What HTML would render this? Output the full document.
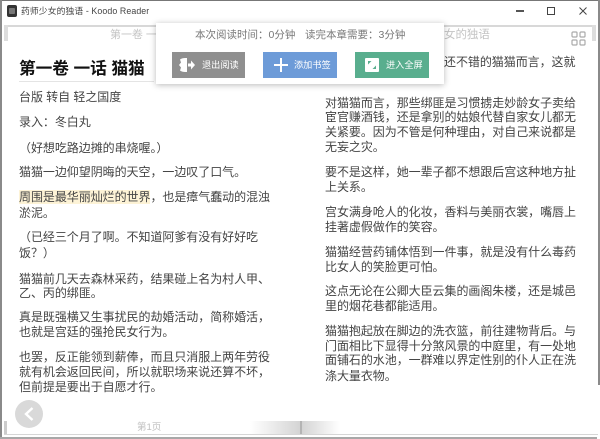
<!DOCTYPE html>
<html><head><meta charset="utf-8">
<style>
html,body{margin:0;padding:0}
body{width:600px;height:439px;overflow:hidden;background:#fff;position:relative;font-family:"Liberation Sans","Noto Sans CJK SC",sans-serif}
#w{position:absolute;left:0;top:0;width:600px;height:439px;filter:blur(.3px)}
.l{position:absolute;white-space:nowrap;font-size:12px;letter-spacing:-.05px;line-height:16px;height:16px;color:#444}
.r{position:absolute}
.btn{position:absolute;top:52px;height:26px;color:#fff;font-size:9.2px;line-height:26px;box-sizing:border-box}
</style></head><body><div id="w">
<!-- window frame -->
<div class="r" style="left:0;top:0;width:600px;height:1px;background:#777"></div>
<div class="r" style="left:0;top:0;width:2px;height:439px;background:#8a8a8a"></div>
<div class="r" style="left:598px;top:0;width:2px;height:385px;background:#8a8a8a"></div>
<div class="r" style="left:0;top:437px;width:597px;height:2px;background:#a8a8a8"></div>
<!-- title bar -->
<div class="r" style="left:7px;top:5px;width:10px;height:12px;border-radius:2px;background:#333"></div>
<div class="r" style="left:9px;top:8px;width:6px;height:6px;background:#777;border-radius:1px"></div>
<div class="l" style="left:21px;top:3px;font-size:8.8px;letter-spacing:.1px;color:#444">药师少女的独语 - Koodo Reader</div>
<div class="r" style="left:516px;top:10px;width:8px;height:1.5px;background:#555"></div>
<div class="r" style="left:547px;top:7px;width:6px;height:6px;border:1px solid #444"></div>
<svg class="r" style="left:578px;top:6px" width="10" height="10"><path d="M1.5 1.5L8.5 8.5M8.5 1.5L1.5 8.5" stroke="#444" stroke-width="1"/></svg>
<!-- reader frame -->
<div class="r" style="left:4px;top:25px;width:592px;height:2px;background:#d8d8d8"></div>
<div class="r" style="left:4px;top:25px;width:4px;height:16px;background:#ddd"></div>
<div class="r" style="left:592px;top:25px;width:4px;height:16px;background:#ddd"></div>
<!-- running head -->
<div class="l" style="left:110px;top:27px;font-size:11px;color:#c4c4c4">第一卷 一话 猫猫</div>
<div class="l" style="left:444px;top:27px;font-size:11.5px;color:#c4c4c4">女的独语</div>
<svg class="r" style="left:571px;top:31px" width="15" height="15"><g fill="none" stroke="#aaa" stroke-width="1.2"><rect x="1" y="1" width="5" height="5" rx="1"/><rect x="9" y="1" width="5" height="5" rx="1"/><rect x="1" y="9" width="5" height="5" rx="1"/><rect x="9" y="9" width="5" height="5" rx="1"/></g></svg>
<!-- left column -->
<div class="l" style="left:19px;top:58px;font-size:16.7px;line-height:22px;height:22px;font-weight:700;color:#111">第一卷 一话 猫猫</div>
<div class="r" style="left:19px;top:81px;width:135px;height:1px;background:#e4e4e4"></div>
<div class="l" style="left:19px;top:89px">台版 转自 轻之国度</div>
<div class="l" style="left:19px;top:114px">录入：冬白丸</div>
<div class="l" style="left:19px;top:140px">（好想吃路边摊的串烧喔。）</div>
<div class="l" style="left:19px;top:164px">猫猫一边仰望阴晦的天空，一边叹了口气。</div>
<div class="r" style="left:19px;top:190px;width:131px;height:14px;background:#fdf3d6"></div>
<div class="l" style="left:19px;top:189px">周围是最华丽灿烂的世界，也是瘴气蠢动的混浊</div>
<div class="l" style="left:19px;top:205px">淤泥。</div>
<div class="l" style="left:19px;top:229px">（已经三个月了啊。不知道阿爹有没有好好吃</div>
<div class="l" style="left:19px;top:245px">饭？）</div>
<div class="l" style="left:19px;top:271px">猫猫前几天去森林采药，结果碰上名为村人甲、</div>
<div class="l" style="left:19px;top:285px">乙、丙的绑匪。</div>
<div class="l" style="left:19px;top:309px">真是既强横又生事扰民的劫婚活动，简称婚活，</div>
<div class="l" style="left:19px;top:324px">也就是宫廷的强抢民女行为。</div>
<div class="l" style="left:19px;top:349px">也罢，反正能领到薪俸，而且只消服上两年劳役</div>
<div class="l" style="left:19px;top:364px">就有机会返回民间，所以就职场来说还算不坏，</div>
<div class="l" style="left:19px;top:379px">但前提是要出于自愿才行。</div>
<!-- right column -->
<div class="l" style="left:444px;top:54px">还不错的猫猫而言，这就</div>
<div class="l" style="left:325px;top:95px">对猫猫而言，那些绑匪是习惯掳走妙龄女子卖给</div>
<div class="l" style="left:325px;top:109px">宦官赚酒钱，还是拿别的姑娘代替自家女儿都无</div>
<div class="l" style="left:325px;top:124px">关紧要。因为不管是何种理由，对自己来说都是</div>
<div class="l" style="left:325px;top:139px">无妄之灾。</div>
<div class="l" style="left:325px;top:164px">要不是这样，她一辈子都不想跟后宫这种地方扯</div>
<div class="l" style="left:325px;top:179px">上关系。</div>
<div class="l" style="left:325px;top:204px">宫女满身呛人的化妆，香料与美丽衣裳，嘴唇上</div>
<div class="l" style="left:325px;top:219px">挂著虚假做作的笑容。</div>
<div class="l" style="left:325px;top:244px">猫猫经营药铺体悟到一件事，就是没有什么毒药</div>
<div class="l" style="left:325px;top:259px">比女人的笑脸更可怕。</div>
<div class="l" style="left:325px;top:283px">这点无论在公卿大臣云集的画阁朱楼，还是城邑</div>
<div class="l" style="left:325px;top:298px">里的烟花巷都能适用。</div>
<div class="l" style="left:325px;top:323px">猫猫抱起放在脚边的洗衣篮，前往建物背后。与</div>
<div class="l" style="left:325px;top:338px">门面相比下显得十分煞风景的中庭里，有一处地</div>
<div class="l" style="left:325px;top:352px">面铺石的水池，一群难以界定性别的仆人正在洗</div>
<div class="l" style="left:325px;top:368px">涤大量衣物。</div>
<!-- popup -->
<div class="r" style="left:156px;top:23px;width:288px;height:61px;background:#fff;box-shadow:0 1px 6px rgba(0,0,0,.28)"></div>
<div class="l" style="left:195px;top:27px;font-size:10.5px;letter-spacing:0;color:#777">本次阅读时间：0分钟</div>
<div class="l" style="left:305px;top:27px;font-size:10.5px;letter-spacing:0;color:#777">读完本章需要：3分钟</div>
<div class="btn" style="left:172px;width:73px;background:#8f8f8f"><span style="position:absolute;left:30px">退出阅读</span></div>
<svg class="r" style="left:178px;top:57px" width="18" height="16"><path d="M2 2.5Q4 1 7 1H9V15H7Q4 15 2 13.5L3 10.5L1 8L3 5.5Z" fill="#fff"/><path d="M10 6.5H13V3.5L17 8L13 12.5V9.5H10Z" fill="#fff"/></svg>
<div class="btn" style="left:263px;width:74px;background:#6d9bd8"><span style="position:absolute;left:31px">添加书签</span></div>
<svg class="r" style="left:273px;top:57px" width="16" height="16"><path d="M8 1V15M1 8H15" stroke="#fff" stroke-width="2"/></svg>
<div class="btn" style="left:355px;width:74px;background:#59ae8e"><span style="position:absolute;left:31px">进入全屏</span></div>
<svg class="r" style="left:365px;top:58px" width="14" height="14"><rect width="14" height="14" rx="1" fill="#fff"/><path d="M3 3H6.5L3 6.5ZM11 11H7.5L11 7.5Z" fill="#59ae8e"/></svg>
<!-- bottom -->
<div class="r" style="left:15px;top:400px;width:28px;height:28px;border-radius:50%;background:#d9d9d9"></div>
<svg class="r" style="left:23px;top:406px" width="12" height="16"><path d="M9.5 2L3 8L9.5 14" fill="none" stroke="#fff" stroke-width="2.4"/></svg>
<div class="r" style="left:4px;top:421px;width:3px;height:14px;background:#ccc"></div>
<div class="r" style="left:4px;top:434px;width:594px;height:1px;background:#d6d6d6"></div>
<div class="r" style="left:250px;top:421px;width:50px;height:13px;background:linear-gradient(to right,#fff,#d4d4d4)"></div>
<div class="r" style="left:300px;top:421px;width:2px;height:13px;background:#b4b4b4"></div>
<div class="r" style="left:302px;top:421px;width:38px;height:13px;background:linear-gradient(to right,#d4d4d4,#fff)"></div>
<div class="l" style="left:137px;top:420px;font-size:9.5px;letter-spacing:0;color:#c0c0c0">第1页</div>
</div></body></html>
